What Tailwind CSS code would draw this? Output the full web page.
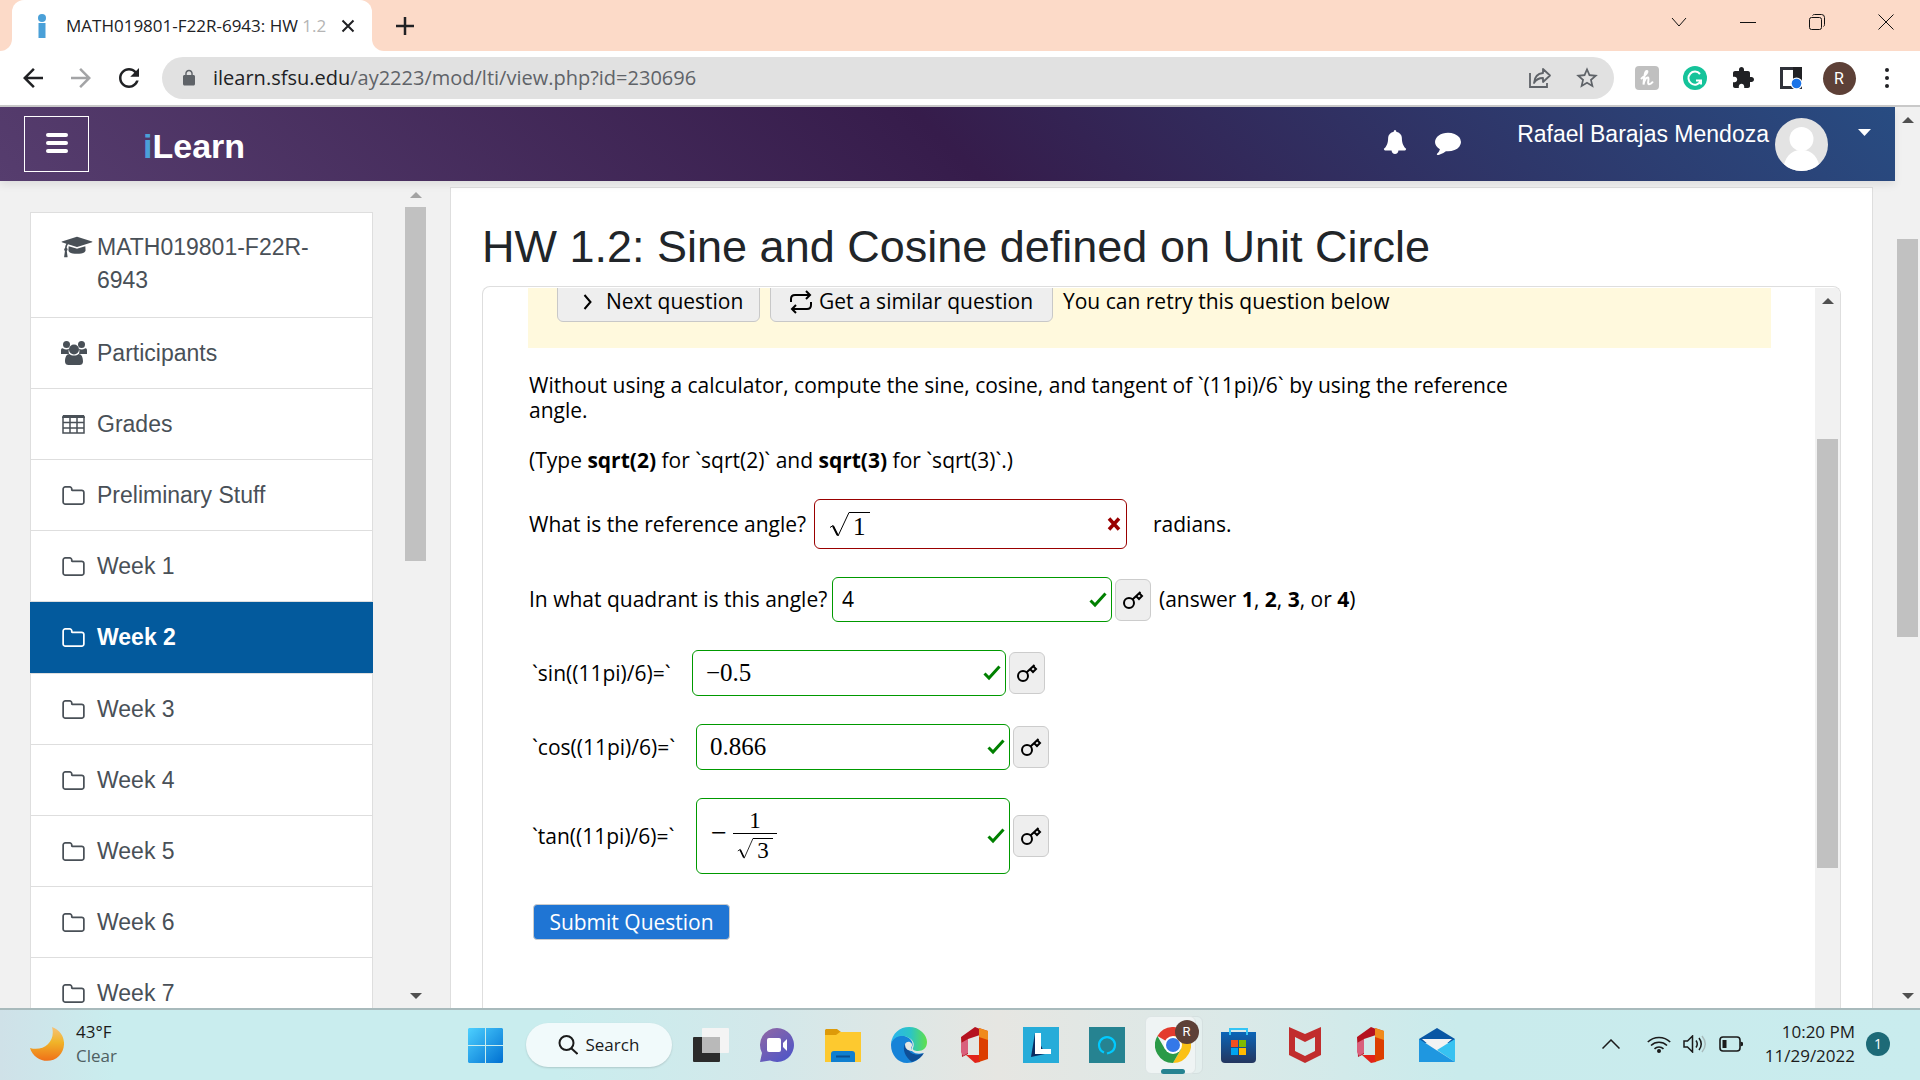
<!DOCTYPE html>
<html lang="en">
<head>
    <meta charset="UTF-8">
    <meta name="viewport" content="width=device-width, initial-scale=1.0">
    <title>MATH019801-F22R-6943: HW 1.2</title>
    <script src="https://cdn.jsdelivr.net/npm/@tailwindcss/browser@4"></script>
</head>
<body class="h-screen flex flex-col overflow-hidden bg-[#f1f1f1] font-['Liberation_Sans',sans-serif]">

    <!--Shared icons-->
    <svg class="hidden">
        <symbol id="folder" viewBox="0 128 1664 1408"><path fill="currentColor" d="M1536 1312v-704q0-40-28-68t-68-28h-704q-40 0-68-28t-28-68v-64q0-40-28-68t-68-28h-320q-40 0-68 28t-28 68v960q0 40 28 68t68 28h1216q40 0 68-28t28-68zm128-704v704q0 92-66 158t-158 66h-1216q-92 0-158-66t-66-158v-960q0-92 66-158t158-66h320q92 0 158 66t66 158v32h672q92 0 158 66t66 158z"/></symbol>
        <symbol id="check" viewBox="0 0 18 16"><path fill="none" stroke="#008000" stroke-width="3" d="M1.5 8.5 6 13 16.500 1.500"/></symbol>
        <symbol id="key" viewBox="0 0 22 20"><g fill="none" stroke="#000" stroke-width="2"><circle cx="7" cy="13" r="5"/><path d="M10.500 9.500 18.500 2M14 6l3 3 3-3-3-3"/></g></symbol>
        <symbol id="radical" viewBox="0 0 20 25"><path fill="none" stroke="#000" stroke-width="1" d="M1 15.500 4 13.500 9 24 20 .5"/><path stroke="#000" stroke-width="2" d="M4 14 8.500 23"/></symbol>
        <symbol id="office" viewBox="0 0 28 36">
            <path fill="#b5121f" d="M0 10 14 0l5 2v6L7 12v15L1 30z"/>
            <path fill="#d9607c" d="M0 16l7-4v14l-5 3-2-4z"/>
            <path fill="#e2231a" d="M5 28h14v7l-5 1z"/>
            <path fill="#dc3e00" d="M18 1l9 3v28l-9 3z"/>
            <path fill="#f08a1c" d="M18 1l9 3v9l-9-3z"/>
        </symbol>
    </svg>

    <!--Tab strip-->
    <div class="h-[51px] shrink-0 flex items-end bg-[#fcdac8]">
        <div class="w-3 h-3 bg-white"><div class="w-3 h-3 bg-[#fcdac8] rounded-br-xl"></div></div>
        <div class="w-[360px] h-full bg-white rounded-t-xl flex items-center pl-[26px] pr-4">
            <svg class="w-2 h-6 shrink-0" viewBox="0 0 8 24"><circle cx="4" cy="4" r="4" fill="#4aa0d8"/><rect y="9" x="0.500" width="7" height="15" fill="#4aa0d8"/></svg>
            <p class="ml-5 w-[264px] overflow-hidden whitespace-nowrap text-[17px] leading-6 font-['Open_Sans',sans-serif] text-[#202124]">MATH019801-F22R-6943: HW <span class="text-[#b5b5b5]">1.2</span></p>
            <button class="ml-auto" aria-label="Close tab"><svg class="w-4 h-4" viewBox="0 0 16 16"><path d="M2.500 2.500l11 11M13.500 2.500l-11 11" stroke="#202124" stroke-width="2"/></svg></button>
        </div>
        <div class="w-3 h-3 bg-white"><div class="w-3 h-3 bg-[#fcdac8] rounded-bl-xl"></div></div>
        <button class="self-center ml-3" aria-label="New tab"><svg class="w-[18px] h-[18px]" viewBox="0 0 18 18"><path d="M9 0v18M0 9h18" stroke="#202124" stroke-width="2.500"/></svg></button>
        <div class="ml-auto self-start flex h-[43px]">
            <button class="w-[69px] grid place-items-center" aria-label="Search tabs"><svg class="w-4 h-4" viewBox="0 0 16 16"><path d="M1 4l7 8 7-8" fill="none" stroke="#111"/></svg></button>
            <button class="w-[69px] grid place-items-center" aria-label="Minimize"><svg class="w-4 h-4" viewBox="0 0 16 16"><path d="M0 8.500h16" stroke="#111"/></svg></button>
            <button class="w-[69px] grid place-items-center" aria-label="Restore"><svg class="w-4 h-4" viewBox="0 0 16 16"><rect x="0.500" y="3.500" width="12" height="12" rx="2" fill="none" stroke="#111"/><path d="M3.500 1.500C4 .8 4.500.5 5.500.5h7a3 3 0 0 1 3 3v7c0 1-.3 1.500-1 2" fill="none" stroke="#111"/></svg></button>
            <button class="w-[69px] grid place-items-center" aria-label="Close"><svg class="w-4 h-4" viewBox="0 0 16 16"><path d="M.5.5l15 15M15.500.5l-15 15" stroke="#111"/></svg></button>
        </div>
    </div>

    <!--Address bar-->
    <div class="h-14 shrink-0 flex items-center gap-[9px] px-[9px] bg-white border-b-2 border-[#c9c9c9]">
        <div class="flex text-[#202124]">
            <button class="w-12 grid place-items-center" aria-label="Back"><svg class="w-[30px] h-[30px]" viewBox="0 0 24 24" fill="currentColor"><path d="M20 11H7.830l5.590-5.590L12 4l-8 8 8 8 1.410-1.410L7.830 13H20v-2z"/></svg></button>
            <button class="w-12 grid place-items-center text-[#a3a4a6]" aria-label="Forward"><svg class="w-[30px] h-[30px]" viewBox="0 0 24 24" fill="currentColor"><path d="M4 11h12.170l-5.590-5.590L12 4l8 8-8 8-1.410-1.410L16.170 13H4v-2z"/></svg></button>
            <button class="w-12 grid place-items-center" aria-label="Reload"><svg class="w-[30px] h-[30px]" viewBox="0 0 24 24" fill="currentColor"><path d="M17.650 6.350C16.200 4.900 14.210 4 12 4c-4.420 0-7.990 3.580-7.990 8s3.570 8 7.990 8c3.730 0 6.840-2.550 7.730-6h-2.080c-.82 2.330-3.040 4-5.650 4-3.310 0-6-2.690-6-6s2.690-6 6-6c1.660 0 3.140.69 4.220 1.780L13 11h7V4l-2.350 2.350z"/></svg></button>
        </div>
        <div class="flex-1 h-[42px] rounded-full bg-[#e1e1e1] flex items-center pl-[18px] pr-[14px]">
            <svg class="w-[18px] h-[18px]" viewBox="0 0 24 24" fill="#5f6368"><path d="M18 8h-1V6c0-2.760-2.240-5-5-5S7 3.240 7 6v2H6c-1.100 0-2 .9-2 2v10c0 1.100.9 2 2 2h12c1.100 0 2-.9 2-2V10c0-1.100-.9-2-2-2zM15.100 8H8.900V6c0-1.710 1.390-3.100 3.100-3.100s3.100 1.390 3.100 3.100v2z"/></svg>
            <div role="textbox" aria-label="Address" class="ml-[15px] flex-1 text-[20px] leading-7 font-['Open_Sans',sans-serif] text-[#5f6368]"><span class="text-[#202124]">ilearn.sfsu.edu</span>/ay2223/mod/lti/view.php?id=230696</div>
            <button aria-label="Share"><svg class="w-6 h-6" viewBox="0 0 24 24" fill="none" stroke="#5f6368" stroke-width="1.800"><path d="M2 7v14h17v-4"/><path d="M15 3l7 6.500-7 6.500v-4c-4 0-7 1.500-9 5 .5-6 3.500-9.500 9-10z" stroke-linejoin="round"/></svg></button>
            <button class="ml-[22px]" aria-label="Bookmark"><svg class="w-[26px] h-[26px]" viewBox="0 0 24 24" fill="#5f6368"><path d="M22 9.240l-7.190-.62L12 2 9.190 8.630 2 9.240l5.460 4.730L5.820 21 12 17.270 18.180 21l-1.630-7.030L22 9.240zM12 15.400l-3.760 2.270 1-4.280-3.320-2.880 4.380-.38L12 6.100l1.710 4.040 4.380.38-3.320 2.880 1 4.280L12 15.400z"/></svg></button>
        </div>
        <div class="flex">
            <button class="w-12 grid place-items-center" aria-label="Honey"><svg class="w-6 h-6" viewBox="0 0 24 24"><rect width="24" height="24" rx="4" fill="#c0c0c0"/><path d="M6.500 12.500C11 9 13.500 5.500 12 5c-2-.5-3 6-3.500 13.500 1-5 3-7.500 4.500-7s-1 6.500.8 6.700c1.200.1 2.700-.7 3.700-2" fill="none" stroke="#fff" stroke-width="2" stroke-linecap="round"/></svg></button>
            <button class="w-12 grid place-items-center" aria-label="Grammarly"><svg class="w-6 h-6" viewBox="0 0 24 24"><circle cx="12" cy="12" r="12" fill="#15c39a"/><path d="M17 8a6.500 6.500 0 1 0 .8 7M13 14.500h5v4" fill="none" stroke="#fff" stroke-width="2"/></svg></button>
            <button class="w-12 grid place-items-center" aria-label="Extensions"><svg class="w-6 h-6" viewBox="0 0 24 24" fill="#202124"><path d="M20.500 11H19V7c0-1.100-.9-2-2-2h-4V3.500C13 2.120 11.880 1 10.500 1S8 2.120 8 3.500V5H4c-1.100 0-1.990.9-1.990 2v3.800H3.500c1.490 0 2.700 1.210 2.700 2.700s-1.210 2.700-2.700 2.700H2V20c0 1.100.9 2 2 2h3.800v-1.500c0-1.490 1.210-2.700 2.700-2.700 1.490 0 2.700 1.210 2.700 2.700V22H17c1.100 0 2-.9 2-2v-4h1.500c1.380 0 2.500-1.120 2.500-2.500S21.880 11 20.500 11z"/></svg></button>
            <button class="w-12 grid place-items-center" aria-label="Side panel"><svg class="w-[22px] h-[22px]" viewBox="0 0 22 22"><path d="M1.500 1.500h19v19h-19z" fill="#fff" stroke="#30323a" stroke-width="3"/><path d="M13 0h9v12h-9z" fill="#202124"/><circle cx="16.500" cy="16.500" r="6" fill="#fff"/><circle cx="16.500" cy="16.500" r="4.800" fill="#1a73e8"/></svg></button>
            <button class="w-12 grid place-items-center" aria-label="Profile"><span class="w-[33px] h-[33px] rounded-full bg-[#5d4037] text-white text-[16px] leading-[33px] font-['Roboto',sans-serif]">R</span></button>
            <button class="w-12 grid place-items-center" aria-label="Menu"><svg class="w-1 h-5" viewBox="0 0 4 20" fill="#202124"><circle cx="2" cy="2" r="2"/><circle cx="2" cy="10" r="2"/><circle cx="2" cy="18" r="2"/></svg></button>
        </div>
    </div>

    <!--Web page-->
    <div class="flex-1 min-h-0 flex">
        <div class="flex-1 min-w-0 flex flex-col">

            <header class="relative h-[74px] shrink-0 flex items-center pl-6 text-white bg-[linear-gradient(45deg,#563d6e_0%,#361c4b_50%,#284c82_100%)] shadow-[0_4px_8px_rgba(0,0,0,0.08)]">
                <button class="w-[65px] h-14 border border-white flex flex-col items-center pt-4 gap-1" aria-label="Side panel">
                    <span class="w-[22px] h-1 rounded-xs bg-white"></span>
                    <span class="w-[22px] h-1 rounded-xs bg-white"></span>
                    <span class="w-[22px] h-1 rounded-xs bg-white"></span>
                </button>
                <a href="#" class="ml-[54px] pt-1 text-[34px] leading-10 font-bold"><span class="text-[#4aa0d8]">i</span>Learn</a>
                <div class="ml-auto mr-6 flex items-center">
                    <button class="pb-1" aria-label="Notifications"><svg class="w-6 h-6" viewBox="0 0 1792 1792" fill="#fff"><path d="M1728 1408q0 52-38 90t-90 38h-448q0 106-75 181t-181 75-181-75-75-181h-448q-52 0-90-38t-38-90q50-42 91-88t85-119.500 74.500-158.500 50-206 19.500-260q0-152 117-282.500t307-158.500q-8-19-8-39 0-40 28-68t68-28 68 28 28 68q0 20-8 39 190 28 307 158.500t117 282.500q0 139 19.500 260t50 206 74.500 158.500 85 119.500 91 88z"/></svg></button>
                    <button class="ml-7 pb-1" aria-label="Messages"><svg class="w-[26px] h-[26px]" viewBox="0 0 1792 1792" fill="#fff"><path d="M1792 896q0 174-120 321.500t-326 233-450 85.500q-70 0-145-8-198 175-460 242-49 14-114 22-17 2-30.500-9t-17.500-29v-1q-3-4-.5-12t2-10 4.500-9.500l6-9 7-8.500 8-9q7-8 31-34.500t34.500-38 31-39.500 32.500-51 27-59 26-76q-157-89-247.500-220t-90.500-281q0-130 71-248.500t191-204.500 286-136.500 348-50.500q244 0 450 85.500t326 233 120 321.500z"/></svg></button>
                    <a href="#" class="ml-14 flex items-center gap-[6px]">
                        <span class="text-[23px] leading-6 pb-5">Rafael Barajas Mendoza</span>
                        <svg class="w-[53px] h-[53px]" viewBox="0 0 53 53"><defs><clipPath id="round"><circle cx="26.500" cy="26.500" r="26.500"/></clipPath></defs><g clip-path="url(#round)"><path fill="#e3e3e3" d="M0 0h53v53H0z"/><circle cx="26.500" cy="21" r="12" fill="#fff"/><path fill="#fff" d="M8 53c1-14 8-21 18.500-21S44 39 45 53z"/></g></svg>
                        <svg class="ml-6 mb-6 w-[13px] h-[7px]" viewBox="0 0 13 7"><path fill="#fff" d="M0 0h13L6.500 7z"/></svg>
                    </a>
                </div>
            </header>

            <div class="flex-1 min-h-0 flex">
                <!--Course navigation-->
                <nav class="w-[373px] shrink-0 pl-[30px] pt-[31px] overflow-hidden text-[23px] leading-[33px] text-[#495057]">
                    <ul class="border border-[#dedede] bg-white divide-y divide-[#dedede]">
                        <li><a href="#" class="h-[104px] px-[30px] pt-[18px] flex gap-1">
                            <svg class="w-8 h-6 mt-[4px] shrink-0" viewBox="0 0 2304 1792" fill="currentColor"><path d="M1774 836l18 316q4 69-82 128t-235 93.500-323 34.500-323-34.500-235-93.500-82-128l18-316 574 181q22 7 48 7t48-7zm530-324q0 23-22 31l-1120 352q-4 1-10 1t-10-1l-652-206q-43 34-71 111.500t-34 178.500q63 36 63 109 0 69-58 107l58 433q2 14-8 25-9 11-24 11h-192q-15 0-24-11-10-11-8-25l58-433q-58-38-58-107 0-73 65-111 11-207 98-330l-333-104q-22-8-22-31t22-31l1120-352q4-1 10-1t10 1l1120 352q22 8 22 31z"/></svg>
                            <span class="w-[222px]">MATH019801-F22R-6943</span>
                        </a></li>
                        <li><a href="#" class="h-[70px] px-[30px] flex items-center">
                            <span class="w-9"><svg class="w-[26px] h-6" viewBox="0 0 26 24" fill="currentColor"><circle cx="5.500" cy="3.500" r="3.500"/><circle cx="20.500" cy="3.500" r="3.500"/><path d="M0 13V9.500C0 7.500 1 7 2 7.500c2 1.300 4.500 1.200 6 .3A7 7 0 0 0 8 13zM26 13V9.500c0-2-1-2.500-2-2-2 1.300-4.500 1.200-6 .3a7 7 0 0 1 0 5.200z"/><circle cx="13" cy="8.500" r="5"/><path d="M4 20.500c0-4.500 1.500-7.500 4.500-7.500 2 2 7 2 9 0 3 0 4.500 3 4.500 7.500 0 2.500-1.500 3.500-3.500 3.500h-11C5.500 24 4 23 4 20.500z"/></svg></span>Participants
                        </a></li>
                        <li><a href="#" class="h-[70px] px-[30px] flex items-center">
                            <span class="w-9 pl-px"><svg class="w-[23px] h-[19px]" viewBox="0 0 23 19"><path fill="none" stroke="currentColor" stroke-width="1.500" d="M1 2h21v16H1zM8 2v16M15 2v16M1 7.500h21M1 13h21"/><path fill="currentColor" d="M1 0h21l1 3H0z"/></svg></span>Grades
                        </a></li>
                        <li><a href="#" class="h-[70px] px-[30px] flex items-center"><span class="w-9 pl-px"><svg class="w-[23px] h-[19px]"><use href="#folder"/></svg></span>Preliminary Stuff</a></li>
                        <li><a href="#" class="h-[70px] px-[30px] flex items-center"><span class="w-9 pl-px"><svg class="w-[23px] h-[19px]"><use href="#folder"/></svg></span>Week 1</a></li>
                        <li class="-mx-px"><a href="#" class="h-[71px] px-[31px] flex items-center bg-[#035a9d] text-white font-bold"><span class="w-9 pl-px"><svg class="w-[23px] h-[19px]"><use href="#folder"/></svg></span>Week 2</a></li>
                        <li><a href="#" class="h-[70px] px-[30px] flex items-center"><span class="w-9 pl-px"><svg class="w-[23px] h-[19px]"><use href="#folder"/></svg></span>Week 3</a></li>
                        <li><a href="#" class="h-[70px] px-[30px] flex items-center"><span class="w-9 pl-px"><svg class="w-[23px] h-[19px]"><use href="#folder"/></svg></span>Week 4</a></li>
                        <li><a href="#" class="h-[70px] px-[30px] flex items-center"><span class="w-9 pl-px"><svg class="w-[23px] h-[19px]"><use href="#folder"/></svg></span>Week 5</a></li>
                        <li><a href="#" class="h-[70px] px-[30px] flex items-center"><span class="w-9 pl-px"><svg class="w-[23px] h-[19px]"><use href="#folder"/></svg></span>Week 6</a></li>
                        <li><a href="#" class="h-[70px] px-[30px] flex items-center"><span class="w-9 pl-px"><svg class="w-[23px] h-[19px]"><use href="#folder"/></svg></span>Week 7</a></li>
                    </ul>
                </nav>
                <div class="ml-[30px] w-[25px] shrink-0 flex flex-col items-center pt-[11px] pb-[9px]">
                    <svg class="w-3 h-[6px] shrink-0" viewBox="0 0 12 6"><path fill="#a3a3a3" d="M0 6h12L6 0z"/></svg>
                    <div class="mt-[9px] w-[21px] h-[354px] bg-[#c1c1c1]"></div>
                    <svg class="mt-auto w-3 h-[6px] shrink-0" viewBox="0 0 12 6"><path fill="#505050" d="M0 0h12L6 6z"/></svg>
                </div>

                <!--Assignment-->
                <main class="mt-[6px] ml-[22px] mr-[22px] flex-1 min-w-0 bg-white border border-b-0 border-[#dedede] px-[31px] pt-[32px] flex flex-col">
                    <h1 class="text-[45px] leading-[54px] text-[#212529]">HW 1.2: Sine and Cosine defined on Unit Circle</h1>
                    <section class="mt-3 flex-1 min-h-0 flex border border-b-0 border-[#dedede] rounded-t-lg overflow-hidden pt-px font-['Open_Sans',sans-serif] text-[21px] leading-[25px] text-black">
                        <div class="flex-1 min-w-0 pl-[45px] pr-11">
                            <div class="h-[60px] overflow-hidden bg-[#fff9dd] pl-[29px]">
                                <div class="-mt-[7px] flex items-center gap-[10px]">
                                    <button class="w-[203px] h-[41px] border border-[#c8c8c8] rounded-md bg-[#eee] flex items-center pl-6">
                                        <svg class="w-3 h-4 mr-3" viewBox="0 0 12 16"><path d="M2.500 1l6 7-6 7" fill="none" stroke="#000" stroke-width="2"/></svg><span class="whitespace-nowrap">Next question</span>
                                    </button>
                                    <button class="w-[283px] h-[41px] border border-[#c8c8c8] rounded-md bg-[#eee] flex items-center pl-[18px]">
                                        <svg class="w-6 h-6 mr-[6px]" viewBox="0 0 24 24" fill="none" stroke="#000" stroke-width="2"><path d="M2 12V9q0-4 4-4h15M17 1l4 4-4 4M22 12v3q0 4-4 4H3M7 15l-4 4 4 4"/></svg><span class="whitespace-nowrap">Get a similar question</span>
                                    </button>
                                    <span>You can retry this question below</span>
                                </div>
                            </div>

                            <div class="pl-px">
                                <p class="mt-[25px] max-w-[1030px]">Without using a calculator, compute the sine, cosine, and tangent of `(11pi)/6` by using the reference angle.</p>
                                <p class="mt-[25px]">(Type <b>sqrt(2)</b> for `sqrt(2)` and <b>sqrt(3)</b> for `sqrt(3)`.)</p>

                                <form class="mt-[26px] flex flex-col gap-7 whitespace-nowrap">
                                    <div class="flex items-center">
                                        <label id="q1" class="w-[285px]">What is the reference angle?</label>
                                        <div role="textbox" aria-labelledby="q1" tabindex="0" class="w-[313px] h-[50px] border border-[#990000] rounded-md flex items-center pl-[14px] pr-[5px] font-['Liberation_Serif',serif] text-[25px]">
                                            <svg class="w-5 h-[25px]"><use href="#radical"/></svg><span class="h-[25px] border-t border-black px-1 leading-[27px]">1</span>
                                            <svg class="ml-auto w-[14px] h-[14px]" viewBox="0 0 14 14"><path d="M2 1.500l10 11M12 1.500l-10 11" stroke="#990000" stroke-width="3.500"/></svg>
                                        </div>
                                        <span class="ml-[26px]">radians.</span>
                                    </div>
                                    <div class="flex items-center">
                                        <label for="q2" class="w-[303px]">In what quadrant is this angle?</label>
                                        <div class="w-[280px] h-[45px] border border-[#009900] rounded-md flex items-center pl-[9px] pr-1">
                                            <input id="q2" type="text" value="4" class="flex-1 min-w-0 outline-none">
                                            <svg class="w-[18px] h-4"><use href="#check"/></svg>
                                        </div>
                                        <button type="button" aria-label="Show answer" class="ml-[3px] w-9 h-[42px] border border-[#ccc] rounded-md bg-[#eee] grid place-items-center"><svg class="w-[22px] h-5"><use href="#key"/></svg></button>
                                        <span class="ml-2">(answer <b>1</b>, <b>2</b>, <b>3</b>, or <b>4</b>)</span>
                                    </div>
                                    <div class="flex items-center">
                                        <label for="q3" class="w-[163px] pl-[3px]">`sin((11pi)/6)=`</label>
                                        <div class="w-[314px] h-[46px] border border-[#009900] rounded-md flex items-center pl-[13px] pr-1">
                                            <input id="q3" type="text" value="−0.5" class="flex-1 min-w-0 outline-none font-['Liberation_Serif',serif] text-[25px]">
                                            <svg class="w-[18px] h-4"><use href="#check"/></svg>
                                        </div>
                                        <button type="button" aria-label="Show answer" class="ml-[3px] w-9 h-[42px] border border-[#ccc] rounded-md bg-[#eee] grid place-items-center"><svg class="w-[22px] h-5"><use href="#key"/></svg></button>
                                    </div>
                                    <div class="flex items-center">
                                        <label for="q4" class="w-[167px] pl-[3px]">`cos((11pi)/6)=`</label>
                                        <div class="w-[314px] h-[46px] border border-[#009900] rounded-md flex items-center pl-[13px] pr-1">
                                            <input id="q4" type="text" value="0.866" class="flex-1 min-w-0 outline-none font-['Liberation_Serif',serif] text-[25px]">
                                            <svg class="w-[18px] h-4"><use href="#check"/></svg>
                                        </div>
                                        <button type="button" aria-label="Show answer" class="ml-[3px] w-9 h-[42px] border border-[#ccc] rounded-md bg-[#eee] grid place-items-center"><svg class="w-[22px] h-5"><use href="#key"/></svg></button>
                                    </div>
                                    <div class="flex items-center">
                                        <label id="q5" class="w-[167px] pl-[3px]">`tan((11pi)/6)=`</label>
                                        <div role="textbox" aria-labelledby="q5" tabindex="0" class="w-[314px] h-[76px] border border-[#009900] rounded-md flex items-center pl-[14px] pr-1 font-['Liberation_Serif',serif] text-[23px]">
                                            <span class="w-[22px] pb-2 text-[28px]">−</span>
                                            <span class="pb-1 flex flex-col items-center">
                                                <span class="leading-6">1</span>
                                                <span class="w-11 border-t border-black pt-1 flex justify-center">
                                                    <svg class="w-4 h-[21px]" viewBox="0 0 20 25" preserveAspectRatio="none"><use href="#radical"/></svg><span class="h-[21px] border-t border-black px-1 leading-[23px]">3</span>
                                                </span>
                                            </span>
                                            <svg class="ml-auto w-[18px] h-4"><use href="#check"/></svg>
                                        </div>
                                        <button type="button" aria-label="Show answer" class="ml-[3px] w-9 h-[42px] border border-[#ccc] rounded-md bg-[#eee] grid place-items-center"><svg class="w-[22px] h-5"><use href="#key"/></svg></button>
                                    </div>
                                    <button type="button" class="ml-1 mt-[2px] w-[197px] h-9 rounded-sm border border-[#ccc] bg-[#1f75d4] text-white">Submit Question</button>
                                </form>
                            </div>
                        </div>
                        <div class="w-[25px] shrink-0 bg-[#f1f1f1] flex flex-col items-center pt-[10px]">
                            <svg class="w-3 h-[6px] shrink-0" viewBox="0 0 12 6"><path fill="#505050" d="M0 6h12L6 0z"/></svg>
                            <div class="mt-[135px] w-[21px] h-[429px] bg-[#c1c1c1]"></div>
                        </div>
                    </section>
                </main>
            </div>
        </div>

        <!--Window scroll bar-->
        <div class="w-[25px] shrink-0 flex flex-col items-center pt-[10px] pb-[9px]">
            <svg class="w-3 h-[6px] shrink-0" viewBox="0 0 12 6"><path fill="#505050" d="M0 6h12L6 0z"/></svg>
            <div class="mt-[116px] w-[21px] h-[398px] bg-[#c1c1c1]"></div>
            <svg class="mt-auto w-3 h-[6px] shrink-0" viewBox="0 0 12 6"><path fill="#505050" d="M0 0h12L6 6z"/></svg>
        </div>
    </div>

    <!--Taskbar-->
    <footer class="h-[72px] shrink-0 border-t-2 border-[#a8babc] grid grid-cols-[1fr_auto_1fr] items-center bg-[linear-gradient(90deg,#cfe1e8_0%,#c9edee_6%,#c9edee_29%,#d3e8ea_40%,#e6e6e2_52%,#dbe9e8_64%,#c9ebec_76%,#c9ecee_100%)] font-['Open_Sans',sans-serif] text-[17px] leading-6 text-[#1b1b1b]">
        <div class="flex items-center gap-3 pl-[30px] pb-[2px]">
            <svg class="w-[34px] h-[34px]" viewBox="0 0 34 34"><defs><linearGradient id="moon" x2="0" y2="1"><stop stop-color="#f5c27a"/><stop offset=".45" stop-color="#f0b429"/><stop offset="1" stop-color="#f07018"/></linearGradient></defs><path fill="url(#moon)" d="M22 0c14 5 15 21 7 29-9 9-25 5-29-8 14 4 26-7 22-21z"/></svg>
            <div><p>43°F</p><p class="text-[#4f6062]">Clear</p></div>
        </div>

        <div class="flex items-center pl-[2px]">
            <button class="w-[66px] grid place-items-center" aria-label="Start"><svg class="w-[35px] h-[35px]" viewBox="0 0 35 35"><defs><linearGradient id="win" x2="1" y2="1"><stop stop-color="#4dd0ff"/><stop offset="1" stop-color="#0070d1"/></linearGradient></defs><path fill="url(#win)" d="M1 0h16v17H0V1zM18 0h16l1 1v16H18zM0 18h17v17H1l-1-1zM18 18h17v16l-1 1H18z"/></svg></button>
            <button class="ml-[7px] mr-[6px] w-[146px] h-11 rounded-full bg-[#f1fafb] shadow-[0_1px_2px_rgba(0,0,0,0.15)] flex items-center pl-8 gap-2"><svg class="w-5 h-5" viewBox="0 0 20 20" fill="none" stroke="#1b1b1b" stroke-width="2"><circle cx="8.500" cy="8" r="7"/><path d="M13.500 13.500 19.500 19"/></svg>Search</button>
            <button class="w-[66px] grid place-items-center" aria-label="Task view"><svg class="w-9 h-[34px]" viewBox="0 0 36 34"><rect y="9" width="27" height="25" rx="1" fill="#2b2b2b"/><rect x="9" width="27" height="25" rx="1" fill="#f4f4f4"/><path d="M9 9h18v16H9z" fill="#b9b9b9"/></svg></button>
            <button class="w-[66px] grid place-items-center" aria-label="Chat"><svg class="w-[34px] h-[34px]" viewBox="0 0 34 34"><defs><linearGradient id="chat" x1="0" y1=".2" x2=".6" y2="1"><stop stop-color="#8a66a8"/><stop offset="1" stop-color="#5557c4"/></linearGradient></defs><path fill="url(#chat)" d="M17 0a17 17 0 1 1-7 32.500L0 34l2-9A17 17 0 0 1 17 0z"/><rect x="7" y="10" width="14" height="14" rx="2" fill="#fff"/><path d="M23 15l4-4v12l-4-4z" fill="#fff"/></svg></button>
            <button class="w-[66px] grid place-items-center" aria-label="File Explorer"><svg class="w-9 h-[33px]" viewBox="0 0 36 33"><path fill="#dd9a09" d="M0 1l1-1h11l4 3v6H0z"/><path fill="#fdc92f" d="M0 6h11l4-3h21v30H0z"/><path fill="#0f7fd0" d="M6 33V25q0-3 3-3h18q3 0 3 3v8z"/><path d="M11 27.500h14" stroke="#0a4f91" stroke-width="2"/></svg></button>
            <button class="w-[66px] grid place-items-center" aria-label="Edge"><svg class="w-9 h-9" viewBox="0 0 36 36"><defs><linearGradient id="edge" x2="1"><stop stop-color="#2ab3ef"/><stop offset=".55" stop-color="#2cc5c4"/><stop offset="1" stop-color="#60e04a"/></linearGradient></defs><path fill="#1683d8" d="M0 18C0 10 8 7 14 9c6 2 9 7 7 11-3 5 5 8 11 6-3 7-10 10-16 10C7 36 0 28 0 18z"/><path fill="#0f4f97" d="M14 17c-3 5 0 13 7 18 6-2 10-5 12-9-8 4-16 0-15-5 0-3 1-4 0-5-1-1-3-1-4 1z"/><path fill="url(#edge)" d="M0 17C1 6 9 0 18 0c11 0 18 8 18 15 0 6-4 9-9 9-3 0-6-1-5-3 2-4 0-8-4-10C11 7 3 9 0 17z"/><path fill="#e5e7e4" d="M14 17c2-4 8-2 7 2-2 3 0 4 1 5-4 0-8-1-8-7z"/></svg></button>
            <button class="w-[66px] grid place-items-center" aria-label="Office"><svg class="w-7 h-9"><use href="#office"/></svg></button>
            <button class="w-[66px] grid place-items-center" aria-label="Lenovo Vantage"><svg class="w-9 h-9" viewBox="0 0 36 36"><path fill="#26acd9" d="M0 0h36v36H0z"/><path fill="#0a2c62" d="M12 6L8 30l14-3z"/><path fill="#fff" d="M12 6h6v16h10v5H12z"/></svg></button>
            <button class="w-[66px] grid place-items-center" aria-label="Alexa"><svg class="w-9 h-9" viewBox="0 0 36 36"><path fill="#268391" d="M0 0h36v36H0z"/><path d="M15 25.500a8 8 0 1 1 6 0l-3 1" fill="none" stroke="#00caff" stroke-width="2.200"/></svg></button>
            <button class="relative w-[66px] h-[58px] grid place-items-center" aria-label="Chrome">
                <span class="absolute left-[7px] right-[3px] inset-y-0 rounded-md bg-[#e4efee] border border-[#d5e0e0]"></span>
                <span class="absolute left-[5px] right-[10px] inset-y-0 rounded-md bg-[#eff4f4] border border-[#dde5e5]"></span>
                <svg class="relative w-9 h-9" viewBox="0 0 36 36"><path fill="#e33b2e" d="M18 18 2.400 9A18 18 0 0 1 33.600 9z"/><path fill="#fbc116" d="M18 18V9h15.600A18 18 0 0 1 18 36l7.800-13.500z"/><path fill="#2a9a47" d="M18 18l7.800 4.500L18 36A18 18 0 0 1 2.400 9l7.800 13.500z"/><circle cx="18" cy="18" r="9" fill="#fff"/><circle cx="18" cy="18" r="7" fill="#3478e8"/></svg>
                <span class="absolute left-[35px] top-[4px] w-6 h-6 rounded-full bg-[#5d4037] text-white text-[13px] leading-6 font-['Roboto',sans-serif]">R</span>
                <span class="absolute left-[21px] bottom-0 w-6 h-[5px] rounded-full bg-[#268391]"></span>
            </button>
            <button class="w-[66px] grid place-items-center" aria-label="Microsoft Store"><svg class="w-[35px] h-[35px]" viewBox="0 0 35 35"><defs><linearGradient id="store" x2="0" y2="1"><stop stop-color="#0b65b8"/><stop offset="1" stop-color="#24365f"/></linearGradient></defs><path fill="url(#store)" d="M0 4h35v27q0 4-4 4H4q-4 0-4-4z"/><path d="M9 7V1h17v6" fill="none" stroke="#33c4f5" stroke-width="2"/><path fill="#f25022" d="M10 12h7v7h-7z"/><path fill="#7fba00" d="M18 12h7v7h-7z"/><path fill="#00a4ef" d="M10 20h7v7h-7z"/><path fill="#ffb900" d="M18 20h7v7h-7z"/></svg></button>
            <button class="w-[66px] grid place-items-center" aria-label="McAfee"><svg class="w-8 h-9" viewBox="0 0 32 36"><path fill="#c12d2d" fill-rule="evenodd" d="M0 0l16 7 16-7v28l-16 8-16-8zM6 10v14l10 5 10-5V10l-10 5z"/></svg></button>
            <button class="w-[66px] grid place-items-center" aria-label="Office"><svg class="w-7 h-9"><use href="#office"/></svg></button>
            <button class="w-[66px] grid place-items-center" aria-label="Mail"><svg class="w-9 h-[34px]" viewBox="0 0 36 34"><path fill="#0a57a4" d="M0 11 18 0l18 11v4H0z"/><path fill="#f3f3f3" d="M3 11h30L18 24z"/><path fill="#37c2f1" d="M36 11v23L18 22z"/><path fill="#1f97e0" d="M0 11l36 23H0z"/></svg></button>
        </div>

        <div class="flex items-center justify-end pr-[30px] pb-[2px]">
            <svg class="w-[18px] h-[10px]" viewBox="0 0 18 10"><path d="M.5 9.500 9 1l8.500 8.500" fill="none" stroke="#1b1b1b" stroke-width="1.500"/></svg>
            <svg class="ml-[27px] w-6 h-[17px]" viewBox="0 0 24 17" fill="none" stroke="#1b1b1b" stroke-width="1.600"><path d="M.8 6a16 16 0 0 1 22.400 0M4 9.500a11.500 11.500 0 0 1 16 0M7.500 12.800a6.500 6.500 0 0 1 9 0"/><circle cx="12" cy="15" r="1.200" fill="#1b1b1b"/></svg>
            <svg class="ml-3 w-6 h-[18px]" viewBox="0 0 24 18" fill="none" stroke="#1b1b1b" stroke-width="1.500"><path d="M1 6h3.500l5-5v16l-5-5H1zM13 5.500q2.500 3.500 0 7M16 3q4.500 6 0 12"/><path d="M19 1q6.500 8 0 16" stroke="#a9bcbd"/></svg>
            <svg class="ml-3 w-6 h-4" viewBox="0 0 24 16"><rect x="1" y="1" width="20" height="14" rx="3" fill="none" stroke="#1b1b1b" stroke-width="1.600"/><path d="M3.500 4h4v8h-4zM21.500 5.500l2.500 1v3l-2.500 1z" fill="#1b1b1b"/></svg>
            <div class="w-[112px] text-right"><p>10:20 PM</p><p>11/29/2022</p></div>
            <span class="ml-[11px] w-6 h-6 rounded-full bg-[#1d6a77] text-white text-[14px] text-center leading-6">1</span>
        </div>
    </footer>
</body>
</html>
